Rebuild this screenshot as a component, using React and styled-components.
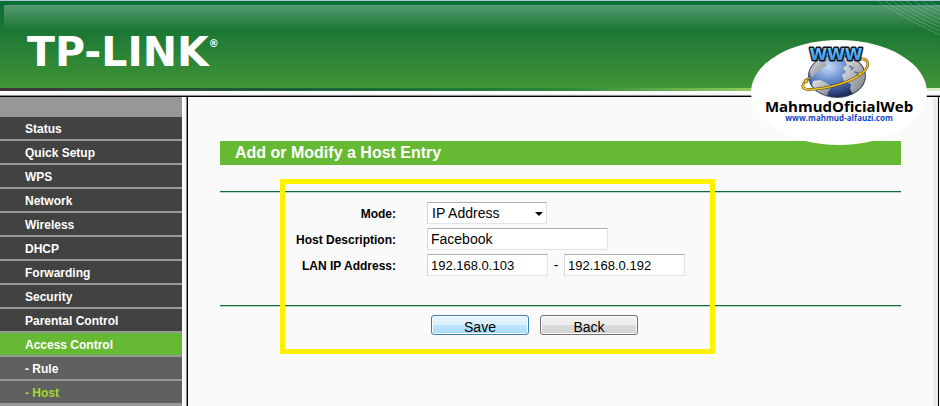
import React, { useState } from "react";
import styled, { createGlobalStyle } from "styled-components";

const menuItems = [
  { label: "Status" },
  { label: "Quick Setup" },
  { label: "WPS" },
  { label: "Network" },
  { label: "Wireless" },
  { label: "DHCP" },
  { label: "Forwarding" },
  { label: "Security" },
  { label: "Parental Control" },
  { label: "Access Control", active: true },
  { label: "- Rule", sub: true },
  { label: "- Host", sub: true, current: true },
];

function SwooshLines() {
  return (
    <Swoosh viewBox="0 0 64 36" aria-hidden="true">
      <g fill="none" stroke="#a5cfaa" strokeWidth="0.8" strokeDasharray="2 0.6" opacity="0.6">
        <path d="M2 0 Q28 17 64 34" />
        <path d="M9 0 Q34 17 64 30" />
        <path d="M16 0 Q38 15 64 26" />
        <path d="M23 0 Q42 13 64 22" />
        <path d="M30 0 Q46 11 64 18" />
        <path d="M38 0 Q50 8 64 14" />
        <path d="M46 0 Q54 6 64 10" />
        <path d="M54 0 Q58 3 64 6" />
      </g>
    </Swoosh>
  );
}

function Globe() {
  return (
    <GlobeSvg viewBox="0 0 80 54" role="img" aria-label="WWW globe">
      <defs>
        <radialGradient id="ocean" cx="35%" cy="28%" r="78%">
          <stop offset="0" stopColor="#c6dcf8" />
          <stop offset="0.4" stopColor="#6d90cf" />
          <stop offset="0.8" stopColor="#2d4582" />
          <stop offset="1" stopColor="#182340" />
        </radialGradient>
        <linearGradient id="land" x1="0" y1="0" x2="1" y2="1">
          <stop offset="0" stopColor="#e9ebf0" />
          <stop offset="1" stopColor="#73757e" />
        </linearGradient>
        <linearGradient id="www" x1="0" y1="0" x2="0" y2="1">
          <stop offset="0" stopColor="#7dd0ff" />
          <stop offset="1" stopColor="#1f86e0" />
        </linearGradient>
        <clipPath id="sphere">
          <ellipse cx="38" cy="31" rx="28" ry="21" />
        </clipPath>
      </defs>
      <ellipse cx="38" cy="31" rx="29" ry="22" fill="#454c60" />
      <ellipse cx="38" cy="31" rx="28" ry="21" fill="url(#ocean)" />
      <g clipPath="url(#sphere)" fill="url(#land)">
        <path d="M10 25 Q13 16 22 13 L29 15 L25 18 L28 21 L22 23 L21 27 L16 29 L13 33 Z" />
        <path d="M14 36 L21 35 L28 38 L33 42 L29 47 L28 53 L19 48 L13 41 Z" />
        <path d="M45 13 L54 12 L61 18 L67 28 L66 34 L63 43 L55 51 L51 44 L52 39 L45 36 L43 30 L47 27 L44 23 L48 20 Z" />
        <path d="M35 13 L40 12 L42 15 L38 17 Z" />
      </g>
      <path d="M50 21 l4 2 l-2 2 M55 27 l5 1 l-3 3" stroke="#5974aa" strokeWidth="1.4" fill="none" />
      <path
        d="M10 33 C0 41 2 46 17 44 C37 42 60 34 67 24 C71 18 68 13 61 14"
        fill="none"
        stroke="#4f3c08"
        strokeWidth="2.6"
      />
      <path
        d="M10 33 C0 41 2 46 17 44 C37 42 60 34 67 24 C71 18 68 13 61 14"
        fill="none"
        stroke="#f2c52e"
        strokeWidth="1.6"
      />
      <circle cx="7" cy="36" r="2" fill="#f2c52e" stroke="#6b4e08" strokeWidth="0.6" />
      <circle cx="61" cy="29" r="2" fill="#f2c52e" stroke="#6b4e08" strokeWidth="0.6" />
      <text
        x="37"
        y="15"
        textAnchor="middle"
        fontFamily="DejaVu Sans, sans-serif"
        fontWeight="bold"
        fontSize="16"
        fill="url(#www)"
        stroke="#0b1522"
        strokeWidth="3"
        strokeLinejoin="round"
        paintOrder="stroke"
      >
        WWW
      </text>
    </GlobeSvg>
  );
}

export default function App() {
  const [mode, setMode] = useState("ip");
  const [description, setDescription] = useState("Facebook");
  const [startIp, setStartIp] = useState("192.168.0.103");
  const [endIp, setEndIp] = useState("192.168.0.192");

  return (
    <Page>
      <GlobalStyle />
      <Header>
        <HeaderShine />
        <Logo>
          TP-LINK<LogoMark>®</LogoMark>
        </Logo>
        <SwooshLines />
        <Badge>
          <Globe />
          <BadgeName>MahmudOficialWeb</BadgeName>
          <BadgeUrl href="#site">www.mahmud-alfauzi.com</BadgeUrl>
        </Badge>
      </Header>
      <HeaderRule />
      <Body>
        <Sidebar>
          {menuItems.map((item) => (
            <MenuLink
              key={item.label}
              href="#menu"
              $active={item.active}
              $sub={item.sub}
              $current={item.current}
            >
              {item.label}
            </MenuLink>
          ))}
        </Sidebar>
        <Divider />
        <Content>
          <Title>Add or Modify a Host Entry</Title>
          <HostForm onSubmit={(e) => e.preventDefault()}>
            <Fields>
              <Label htmlFor="mode">Mode:</Label>
              <SelectWrap>
                <Select id="mode" value={mode} onChange={(e) => setMode(e.target.value)}>
                  <option value="ip">IP Address</option>
                  <option value="mac">MAC Address</option>
                </Select>
                <Arrow viewBox="0 0 8 4" aria-hidden="true">
                  <path d="M0 0h8L4 4z" />
                </Arrow>
              </SelectWrap>
              <Label htmlFor="description">Host Description:</Label>
              <Input
                id="description"
                $wide
                value={description}
                onChange={(e) => setDescription(e.target.value)}
              />
              <Label htmlFor="startIp">LAN IP Address:</Label>
              <Range>
                <Input id="startIp" $small value={startIp} onChange={(e) => setStartIp(e.target.value)} />
                <Dash>-</Dash>
                <Input
                  $small
                  aria-label="LAN IP Address end"
                  value={endIp}
                  onChange={(e) => setEndIp(e.target.value)}
                />
              </Range>
            </Fields>
            <Actions>
              <Button type="submit" $primary>
                Save
              </Button>
              <Button type="button">Back</Button>
            </Actions>
            <Highlight />
          </HostForm>
        </Content>
      </Body>
    </Page>
  );
}

const GlobalStyle = createGlobalStyle`
  * {
    box-sizing: border-box;
  }
  body {
    margin: 0;
    background: #fafafa;
    font-family: "Liberation Sans", Arial, sans-serif;
  }
`;

const Page = styled.div`
  display: flex;
  flex-direction: column;
  min-height: 100vh;
`;

const Header = styled.header`
  position: relative;
  height: 88px;
  padding: 28px 27px 0;
  border-top: 1px solid #a3c3d6;
  background: linear-gradient(#0a6c36 4px, #1c7735 30px, #419535);
`;

const HeaderShine = styled.div`
  position: absolute;
  top: 4px;
  left: 4px;
  right: 0;
  height: 24px;
  background: linear-gradient(#569b74, #1c7735);
`;

const Logo = styled.div`
  position: relative;
  display: flex;
  align-items: flex-start;
  color: #fff;
  font-family: "DejaVu Sans", Verdana, sans-serif;
  font-size: 41px;
  font-weight: bold;
  line-height: 46px;
`;

const LogoMark = styled.span`
  font-size: 10px;
  line-height: 30px;
`;

const Swoosh = styled.svg`
  position: absolute;
  top: 0;
  right: 0;
  width: 64px;
  height: 36px;
`;

const Badge = styled.div`
  position: absolute;
  z-index: 2;
  top: 39px;
  right: 13px;
  display: flex;
  flex-direction: column;
  align-items: center;
  width: 176px;
  height: 105px;
  padding-top: 5px;
  border-radius: 50%;
  background: #fff;
`;

const GlobeSvg = styled.svg`
  width: 80px;
  height: 54px;
  overflow: visible;
`;

const BadgeName = styled.div`
  color: #000;
  font-family: "Open Sans", "Noto Sans", sans-serif;
  font-size: 15px;
  font-weight: bold;
  line-height: 15px;
`;

const BadgeUrl = styled.a`
  color: #1546c8;
  font-family: "Open Sans", "Noto Sans", sans-serif;
  font-size: 8px;
  font-weight: bold;
  line-height: 8px;
  text-decoration: none;
`;

const HeaderRule = styled.div`
  height: 9px;
  border-bottom: 1px solid #000;
  background:
    linear-gradient(90deg, #403535, #175f39 32%, #2b8638 60%, #8cc95d 79%, #d9efc8) 0 0 / 100% 3px no-repeat,
    linear-gradient(#fff 5px, #ececec 7px, #909090 7px);
`;

const Body = styled.div`
  display: flex;
  flex: 1;
`;

const Sidebar = styled.nav`
  display: flex;
  flex-direction: column;
  flex-shrink: 0;
  gap: 2px;
  width: 182px;
  padding-top: 20px;
  background: #979797;
`;

const MenuLink = styled.a`
  height: 22px;
  padding-left: 25px;
  background: ${(props) => (props.$active ? "#66b932" : props.$sub ? "#606060" : "#424242")};
  color: ${(props) => (props.$current ? "#a3d92f" : "#fff")};
  font-size: 12px;
  font-weight: bold;
  line-height: 24px;
  text-decoration: none;
`;

const Divider = styled.div`
  flex-shrink: 0;
  width: 6px;
  border-right: 1px solid #000;
  background: linear-gradient(90deg, #fff 1px, #ececec 4px, #909090 4px);
`;

const Content = styled.main`
  flex: 1;
  min-width: 0;
  margin-right: 1px;
  padding: 44px 37px 20px 32px;
  border-right: 1px solid #000;
  box-shadow: inset -5px 0 #ececec;
`;

const Title = styled.h1`
  margin: 0 0 26px;
  padding-left: 15px;
  background: #66b932;
  color: #fff;
  font-size: 16px;
  font-weight: bold;
  line-height: 24px;
`;

const HostForm = styled.form`
  position: relative;
`;

const Fields = styled.div`
  display: grid;
  grid-template-columns: 176px 1fr;
  column-gap: 31px;
  row-gap: 4px;
  padding: 10px 0 29px;
  border-top: 1px solid #14693c;
  border-bottom: 1px solid #14693c;
  box-shadow: 0 1px #b5dcc0, inset 0 1px #b5dcc0;
`;

const Label = styled.label`
  height: 22px;
  color: #000;
  font-size: 12px;
  font-weight: bold;
  line-height: 24px;
  text-align: right;
`;

const fieldColors = `
  border: 1px solid #e2e3ea;
  border-top-color: #abadb3;
  border-left-color: #d5d6dd;
  border-radius: 1px;
  background: #fff;
  color: #000;
  font-family: inherit;
`;

const SelectWrap = styled.div`
  position: relative;
  width: 120px;
  height: 22px;
`;

const Select = styled.select`
  ${fieldColors}
  appearance: none;
  width: 100%;
  height: 22px;
  padding: 0 4px;
  font-size: 14px;
`;

const Arrow = styled.svg`
  position: absolute;
  top: 10px;
  right: 4px;
  width: 8px;
  height: 4px;
  pointer-events: none;
`;

const Input = styled.input`
  ${fieldColors}
  width: ${(props) => (props.$wide ? "181px" : "121px")};
  height: 22px;
  padding: 0 3px;
  font-size: ${(props) => (props.$small ? "13px" : "14px")};
`;

const Range = styled.div`
  display: flex;
`;

const Dash = styled.span`
  width: 16px;
  font-size: 14px;
  line-height: 22px;
  text-align: center;
`;

const Actions = styled.div`
  display: flex;
  gap: 11px;
  padding: 9px 0 0 211px;
`;

const Button = styled.button`
  width: 98px;
  height: 20px;
  padding: 3px 0 0;
  border: 1px solid ${(props) => (props.$primary ? "#3c7fb1" : "#707070")};
  border-radius: 3px;
  background: ${(props) =>
    props.$primary
      ? "linear-gradient(#eaf6fd, #d9f0fc 50%, #bee6fd 50%, #a7d9f5)"
      : "linear-gradient(#f2f2f2, #ebebeb 50%, #dddddd 50%, #cfcfcf)"};
  box-shadow: inset 0 0 0 1px #f8fcfe;
  color: #000;
  font-family: inherit;
  font-size: 14px;
  line-height: 16px;
`;

// yellow marker frame drawn over the form
const Highlight = styled.div`
  position: absolute;
  top: -12px;
  bottom: -19px;
  left: 60px;
  width: 435px;
  border: 5px solid #fff200;
  pointer-events: none;
`;
